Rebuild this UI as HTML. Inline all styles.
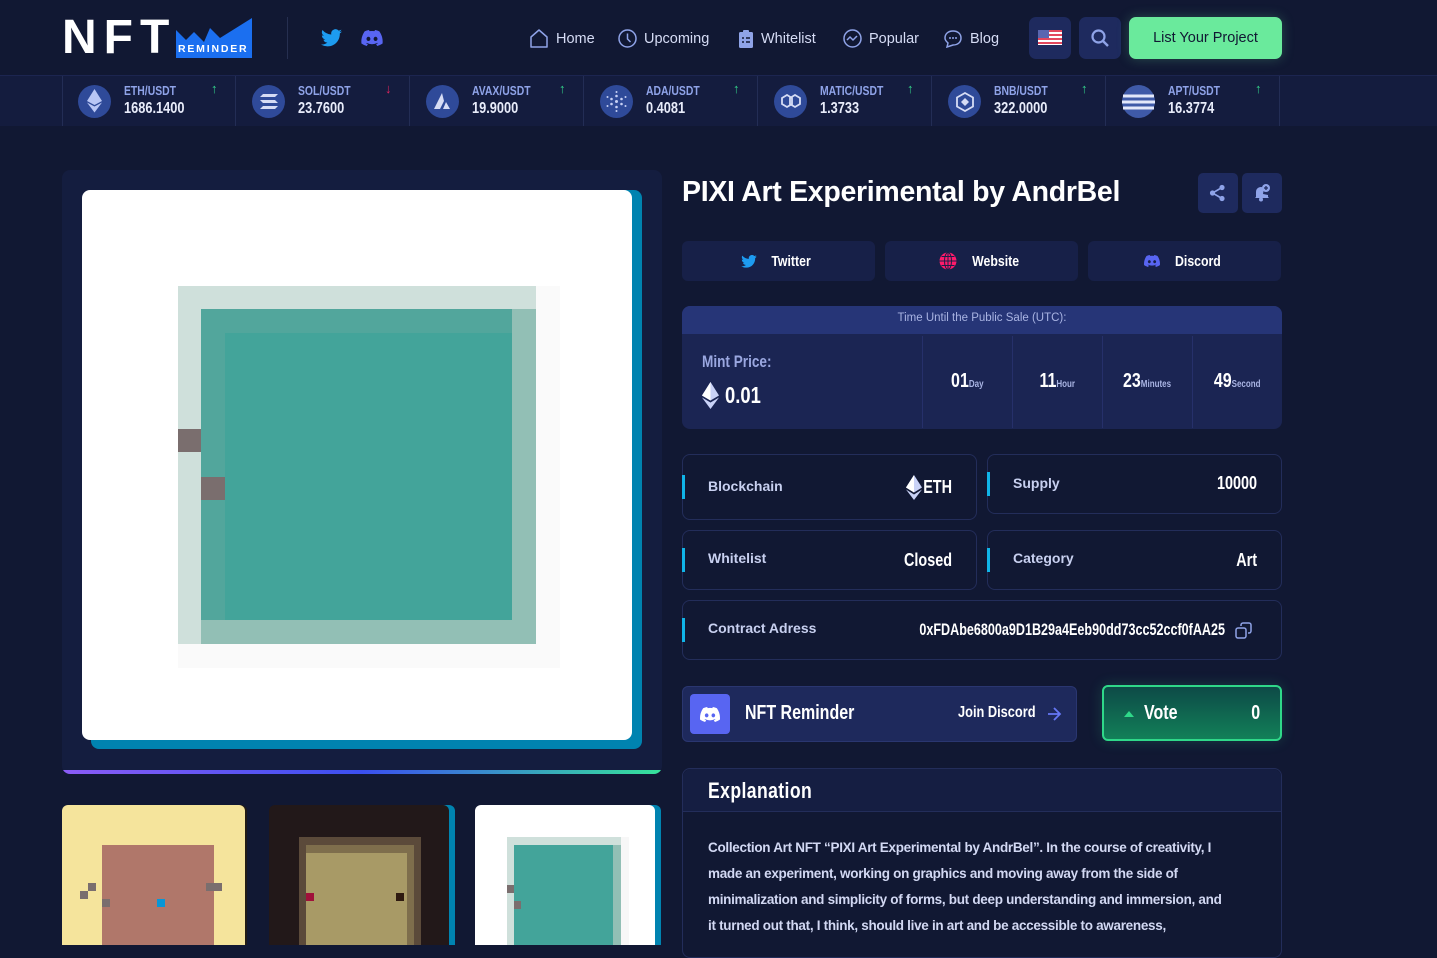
<!DOCTYPE html>
<html><head><meta charset="utf-8">
<style>
*{margin:0;padding:0;box-sizing:border-box}
body{width:1437px;height:940px;overflow:hidden;background:#111833;font-family:"Liberation Sans",sans-serif;color:#fff;position:relative}
.a{position:absolute}
.n{font-weight:bold;transform:scaleX(.8);transform-origin:left center;white-space:nowrap}
.r{transform-origin:right center}
.nav{font-size:14.5px;color:#d6dcf5;display:flex;align-items:center;gap:7px}
.tk{position:absolute;top:76px;height:50px;width:174px;border-right:1px solid #232d55}
.tk .ic{position:absolute;left:16px;top:9px;width:33px;height:33px;border-radius:50%;background:#2f4a99}
.tk .l{position:absolute;left:62px;top:7px;font-size:13px;color:#8fa3e8}
.tk .v{position:absolute;left:62px;top:24px;font-size:16px;color:#e8ecfa}
.tk .ar{position:absolute;left:149px;top:5px;font-size:13px;font-weight:bold}
.sb{position:absolute;top:241px;height:40px;width:193px;background:#172048;border-radius:6px;display:flex;align-items:center;justify-content:center;gap:10px;font-size:15px}
.sb span{font-weight:bold;display:inline-block;transform:scaleX(.82)}
.box{position:absolute;border:1px solid #232d5a;border-radius:8px;background:#111833}
.box .bar{position:absolute;left:-1px;width:3px;height:24px;background:#10b4e8}
.box .k{position:absolute;left:25px;font-size:14px;color:#c8d0f0;font-weight:bold}
.box .val{position:absolute;right:24px;font-size:18px}
.cd{position:absolute;top:336px;width:90px;height:92px;border-left:1px solid #26306a;text-align:center;line-height:90px;font-size:20px}
.cd span{display:inline-block;font-weight:bold;transform:scaleX(.8)}
.cd small{font-size:10px;color:#a9b4e3;font-weight:bold}
</style></head><body>

<div class="a" style="left:62px;top:14px;width:190px;height:46px">
  <div class="a" style="left:0;top:1px;font-size:48px;font-weight:900;letter-spacing:7px;line-height:46px;color:#fff">NFT</div>
  <svg class="a" style="left:114px;top:2px" width="76" height="42"><path d="M0 14 L10 24 L18 16 L28 26 L34 12 L44 22 L76 2 L76 42 L0 42Z" fill="#1b6ff0"/></svg>
  <div class="a" style="left:116px;top:29px;font-size:10.5px;font-weight:bold;letter-spacing:1.8px;color:#fff">REMINDER</div>
</div>
<div class="a" style="left:287px;top:17px;width:1px;height:42px;background:#262f50"></div>
<svg class="a" style="left:321px;top:29px" width="21" height="18" viewBox="0 0 24 20"><path d="M24 2.4a10 10 0 0 1-2.8.8A5 5 0 0 0 23.3.4a10 10 0 0 1-3.1 1.2A4.9 4.9 0 0 0 11.8 6 14 14 0 0 1 1.7.9a4.9 4.9 0 0 0 1.5 6.6 4.9 4.9 0 0 1-2.2-.6 4.9 4.9 0 0 0 3.9 4.9 4.9 4.9 0 0 1-2.2.1 4.9 4.9 0 0 0 4.6 3.4A9.9 9.9 0 0 1 0 17.3 14 14 0 0 0 7.5 19.5c9.1 0 14-7.5 14-14v-.6A10 10 0 0 0 24 2.4z" fill="#1d9bf0"/></svg>
<svg class="a" style="left:361px;top:30px" width="22" height="16" viewBox="0 0 24 18"><path d="M20.3 1.5A19.8 19.8 0 0 0 15.4 0l-.6 1.3a18 18 0 0 0-5.6 0L8.6 0a19.7 19.7 0 0 0-4.9 1.5C.6 6.2-.3 10.7.1 15.2A20 20 0 0 0 6.1 18l1.3-2.1a13 13 0 0 1-2-1l.5-.4a14 14 0 0 0 12.2 0l.5.4a13 13 0 0 1-2 1L17.9 18a20 20 0 0 0 6-2.8c.5-5.2-.9-9.7-3.6-13.7zM8 12.4c-1.2 0-2.2-1.1-2.2-2.4S6.8 7.6 8 7.6s2.2 1.1 2.2 2.4-1 2.4-2.2 2.4zm8 0c-1.2 0-2.2-1.1-2.2-2.4s1-2.4 2.2-2.4 2.2 1.1 2.2 2.4-1 2.4-2.2 2.4z" fill="#5865f2"/></svg>

<div class="a nav" style="left:529px;top:29px"><svg width="20" height="19" viewBox="0 0 20 19"><path d="M2 8 L10 1 L18 8 V18 H2Z" fill="none" stroke="#8fa3e8" stroke-width="1.5" stroke-linejoin="round"/></svg>Home</div>
<div class="a nav" style="left:618px;top:29px"><svg width="19" height="19"><circle cx="9.5" cy="9.5" r="8.5" fill="none" stroke="#8fa3e8" stroke-width="1.5"/><path d="M9.5 4.5V10l3 3" fill="none" stroke="#8fa3e8" stroke-width="1.5"/></svg>Upcoming</div>
<div class="a nav" style="left:738px;top:29px"><svg width="16" height="19"><rect x="1" y="3" width="14" height="16" rx="1.5" fill="#8fa3e8"/><rect x="5" y="1" width="6" height="4" rx="1" fill="#8fa3e8"/><path d="M4 9h2M8 9h4M4 13h2M8 13h4" stroke="#111833" stroke-width="1.4"/></svg>Whitelist</div>
<div class="a nav" style="left:843px;top:29px"><svg width="19" height="19"><circle cx="9.5" cy="9.5" r="8.5" fill="none" stroke="#8fa3e8" stroke-width="1.5"/><path d="M4 11l3-3 3 3 4-4" fill="none" stroke="#8fa3e8" stroke-width="1.5"/></svg>Popular</div>
<div class="a nav" style="left:943px;top:29px"><svg width="20" height="19"><path d="M10 2c5 0 8 3 8 7s-3 7-8 7l-6 2 1-4C3 12 2 11 2 9c0-4 3-7 8-7z" fill="none" stroke="#8fa3e8" stroke-width="1.5"/><circle cx="7" cy="9" r="1" fill="#8fa3e8"/><circle cx="10" cy="9" r="1" fill="#8fa3e8"/><circle cx="13" cy="9" r="1" fill="#8fa3e8"/></svg>Blog</div>

<div class="a" style="left:1029px;top:17px;width:42px;height:42px;border-radius:7px;background:#1e2a5e">
<svg class="a" style="left:9px;top:13px" width="24" height="15"><rect width="24" height="15" fill="#fff"/><path d="M0 1h24M0 5h24M0 9h24M0 13h24" stroke="#e3475d" stroke-width="2"/><rect width="11" height="8" fill="#5a66b0"/></svg></div>
<div class="a" style="left:1079px;top:17px;width:42px;height:42px;border-radius:7px;background:#1e2a5e">
<svg class="a" style="left:12px;top:12px" width="18" height="18"><circle cx="7.5" cy="7.5" r="6" fill="none" stroke="#8fa3e8" stroke-width="2.2"/><path d="M12 12l5 5" stroke="#8fa3e8" stroke-width="2.4"/></svg></div>
<div class="a" style="left:1129px;top:17px;width:153px;height:42px;border-radius:7px;background:#6aea9c;color:#111833;font-size:14.5px;text-align:center;line-height:42px;box-shadow:0 0 12px rgba(106,234,156,.25)">List Your Project</div>

<div class="a" style="left:0;top:75px;width:1437px;height:51px;background:#141c3e;border-top:1px solid #1c2550"></div>
<div class="a" style="left:62px;top:76px;width:1px;height:50px;background:#232d55"></div>
<div class="tk" style="left:62px"><div class="ic"></div><svg class="a" style="left:25px;top:13px" width="15" height="24"><path d="M7.5 0L0 12l7.5 4 7.5-4z" fill="#b9c6f5"/><path d="M0 13.5l7.5 10 7.5-10-7.5 4z" fill="#b9c6f5"/></svg><div class="l n">ETH/USDT</div><div class="v n">1686.1400</div><div class="ar" style="color:#33d28a">↑</div></div>
<div class="tk" style="left:236px"><div class="ic"></div><svg class="a" style="left:24px;top:18px" width="18" height="15"><path d="M3 0h15l-3 3H0zM0 6h15l3 3H3zM3 12h15l-3 3H0z" fill="#d6dcf5"/></svg><div class="l n">SOL/USDT</div><div class="v n">23.7600</div><div class="ar" style="color:#e0245e">↓</div></div>
<div class="tk" style="left:410px"><div class="ic"></div><svg class="a" style="left:24px;top:17px" width="18" height="16"><path d="M8 0L0 16h6l4-8zM12 9l-3 7h7z" fill="#d6dcf5"/></svg><div class="l n">AVAX/USDT</div><div class="v n">19.9000</div><div class="ar" style="color:#33d28a">↑</div></div>
<div class="tk" style="left:584px"><div class="ic"></div><svg class="a" style="left:22px;top:15px" width="21" height="21"><g fill="#c7d0f5"><circle cx="10.5" cy="10.5" r="1.5"/><circle cx="10.5" cy="5" r="1.3"/><circle cx="10.5" cy="16" r="1.3"/><circle cx="5.5" cy="8" r="1.3"/><circle cx="15.5" cy="8" r="1.3"/><circle cx="5.5" cy="13" r="1.3"/><circle cx="15.5" cy="13" r="1.3"/><circle cx="10.5" cy="1" r="1"/><circle cx="10.5" cy="20" r="1"/><circle cx="1.5" cy="6" r="1"/><circle cx="19.5" cy="6" r="1"/><circle cx="1.5" cy="15" r="1"/><circle cx="19.5" cy="15" r="1"/></g></svg><div class="l n">ADA/USDT</div><div class="v n">0.4081</div><div class="ar" style="color:#33d28a">↑</div></div>
<div class="tk" style="left:758px"><div class="ic"></div><svg class="a" style="left:22px;top:18px" width="22" height="15"><path d="M2 4l5-3 5 3v6l-5 3-5-3zM10 4l5-3 5 3v6l-5 3-5-3z" fill="none" stroke="#d6dcf5" stroke-width="1.8"/></svg><div class="l n">MATIC/USDT</div><div class="v n">1.3733</div><div class="ar" style="color:#33d28a">↑</div></div>
<div class="tk" style="left:932px"><div class="ic"></div><svg class="a" style="left:23px;top:16px" width="20" height="20"><path d="M10 1l8 4.5v9L10 19l-8-4.5v-9z" fill="none" stroke="#d6dcf5" stroke-width="1.8"/><path d="M10 6l4 4-4 4-4-4z" fill="#d6dcf5"/></svg><div class="l n">BNB/USDT</div><div class="v n">322.0000</div><div class="ar" style="color:#33d28a">↑</div></div>
<div class="tk" style="left:1106px"><div class="ic" style="background:#3f5aa8"></div><svg class="a" style="left:16px;top:16px" width="33" height="20"><path d="M1 4h31M0 10h33M1 16h31" stroke="#e3e8fa" stroke-width="3"/></svg><div class="l n">APT/USDT</div><div class="v n">16.3774</div><div class="ar" style="color:#33d28a">↑</div></div>

<div class="a" style="left:62px;top:170px;width:600px;height:604px;background:#141d3f;border-radius:8px;overflow:hidden">
  <div class="a" style="left:0;bottom:0;width:600px;height:4px;background:linear-gradient(90deg,#8b5cf6,#3b4ff0 50%,#36e39a)"></div>
</div>
<div class="a" style="left:91px;top:190px;width:551px;height:559px;background:#0083b0;border-radius:8px"></div>
<div class="a" style="left:82px;top:190px;width:550px;height:550px;background:#fff;border-radius:8px;overflow:hidden">
  <div class="a" style="left:96px;top:96px;width:382px;height:382px;background:#fafafa"></div>
  <div class="a" style="left:96px;top:96px;width:358px;height:358px;background:#cfe0db"></div>
  <div class="a" style="left:119px;top:119px;width:335px;height:335px;background:#92bfb5"></div>
  <div class="a" style="left:119px;top:119px;width:311px;height:311px;background:#43a49a"></div>
  <div class="a" style="left:119px;top:119px;width:311px;height:24px;background:#52a69c"></div>
  <div class="a" style="left:119px;top:119px;width:24px;height:311px;background:#52a69c"></div>
  <div class="a" style="left:96px;top:239px;width:23px;height:23px;background:#7a6e6e"></div>
  <div class="a" style="left:119px;top:287px;width:24px;height:23px;background:#7a6e6e"></div>
</div>

<div class="a" style="left:62px;top:805px;width:183px;height:140px;background:#f5e49c;border-radius:6px 6px 0 0;overflow:hidden;box-shadow:2px 0 0 #221b15">
  <div class="a" style="left:40px;top:40px;width:112px;height:100px;background:#b0776a"></div>
  <div class="a" style="left:26px;top:78px;width:8px;height:8px;background:#7a6e6e"></div>
  <div class="a" style="left:18px;top:86px;width:8px;height:8px;background:#7a6e6e"></div>
  <div class="a" style="left:40px;top:94px;width:8px;height:8px;background:#7a6e6e"></div>
  <div class="a" style="left:144px;top:78px;width:16px;height:8px;background:#7a6e6e"></div>
  <div class="a" style="left:95px;top:94px;width:8px;height:8px;background:#0896d6"></div>
</div>
<div class="a" style="left:272px;top:805px;width:183px;height:140px;background:#0083b0;border-radius:6px 6px 0 0"></div>
<div class="a" style="left:269px;top:805px;width:180px;height:140px;background:#221819;border-radius:6px 6px 0 0;overflow:hidden">
  <div class="a" style="left:30px;top:32px;width:122px;height:110px;background:#5b4a3a"></div>
  <div class="a" style="left:37px;top:40px;width:108px;height:100px;background:#7e6e4c"></div>
  <div class="a" style="left:37px;top:48px;width:101px;height:92px;background:#a89a66"></div>
  <div class="a" style="left:37px;top:88px;width:8px;height:8px;background:#a0103a"></div>
  <div class="a" style="left:127px;top:88px;width:8px;height:8px;background:#2e1a10"></div>
</div>
<div class="a" style="left:478px;top:805px;width:183px;height:140px;background:#0083b0;border-radius:6px 6px 0 0"></div>
<div class="a" style="left:475px;top:805px;width:180px;height:140px;background:#fff;border-radius:6px 6px 0 0;overflow:hidden">
  <div class="a" style="left:32px;top:32px;width:122px;height:110px;background:#f7f7f7"></div>
  <div class="a" style="left:32px;top:32px;width:114px;height:110px;background:#cfe0db"></div>
  <div class="a" style="left:39px;top:40px;width:107px;height:100px;background:#92bfb5"></div>
  <div class="a" style="left:39px;top:40px;width:99px;height:100px;background:#43a49a"></div>
  <div class="a" style="left:32px;top:80px;width:7px;height:8px;background:#7a6e6e"></div>
  <div class="a" style="left:39px;top:96px;width:7px;height:8px;background:#7a6e6e"></div>
</div>

<div class="a" style="left:682px;top:176px;font-size:28.5px;font-weight:bold;letter-spacing:-0.3px">PIXI Art Experimental by AndrBel</div>
<div class="a" style="left:1198px;top:173px;width:40px;height:40px;border-radius:5px;background:#1e2a5e"><svg class="a" style="left:11px;top:11px" width="17" height="18"><circle cx="13" cy="3.5" r="2.6" fill="#8fa3e8"/><circle cx="3.5" cy="9" r="2.6" fill="#8fa3e8"/><circle cx="13" cy="14.5" r="2.6" fill="#8fa3e8"/><path d="M13 3.5L3.5 9l9.5 5.5" stroke="#8fa3e8" stroke-width="1.6" fill="none"/></svg></div>
<div class="a" style="left:1242px;top:173px;width:40px;height:40px;border-radius:5px;background:#1e2a5e"><svg class="a" style="left:11px;top:10px" width="18" height="19"><path d="M3 14V9a5 5 0 0 1 8-4l-1 6 5 1v2l1 1H2z" fill="#8fa3e8"/><circle cx="8" cy="16.5" r="2" fill="#8fa3e8"/><circle cx="13" cy="5" r="4" fill="#8fa3e8"/><path d="M13 3v4M11 5h4" stroke="#1e2a5e" stroke-width="1.3"/></svg></div>

<div class="sb" style="left:682px"><svg width="16" height="13" viewBox="0 0 24 20"><path d="M24 2.4a10 10 0 0 1-2.8.8A5 5 0 0 0 23.3.4a10 10 0 0 1-3.1 1.2A4.9 4.9 0 0 0 11.8 6 14 14 0 0 1 1.7.9a4.9 4.9 0 0 0 1.5 6.6 4.9 4.9 0 0 1-2.2-.6 4.9 4.9 0 0 0 3.9 4.9 4.9 4.9 0 0 1-2.2.1 4.9 4.9 0 0 0 4.6 3.4A9.9 9.9 0 0 1 0 17.3 14 14 0 0 0 7.5 19.5c9.1 0 14-7.5 14-14v-.6A10 10 0 0 0 24 2.4z" fill="#1d9bf0"/></svg><span>Twitter</span></div>
<div class="sb" style="left:885px"><svg width="18" height="18"><circle cx="9" cy="9" r="8.5" fill="#ff1a6b"/><path d="M0.5 9h17M9 .5v17M2.5 4.5h13M2.5 13.5h13" stroke="#172048" stroke-width="1"/><ellipse cx="9" cy="9" rx="3.5" ry="8.5" fill="none" stroke="#172048" stroke-width="1"/></svg><span>Website</span></div>
<div class="sb" style="left:1088px"><svg width="16" height="12" viewBox="0 0 24 18"><path d="M20.3 1.5A19.8 19.8 0 0 0 15.4 0l-.6 1.3a18 18 0 0 0-5.6 0L8.6 0a19.7 19.7 0 0 0-4.9 1.5C.6 6.2-.3 10.7.1 15.2A20 20 0 0 0 6.1 18l1.3-2.1a13 13 0 0 1-2-1l.5-.4a14 14 0 0 0 12.2 0l.5.4a13 13 0 0 1-2 1L17.9 18a20 20 0 0 0 6-2.8c.5-5.2-.9-9.7-3.6-13.7zM8 12.4c-1.2 0-2.2-1.1-2.2-2.4S6.8 7.6 8 7.6s2.2 1.1 2.2 2.4-1 2.4-2.2 2.4zm8 0c-1.2 0-2.2-1.1-2.2-2.4s1-2.4 2.2-2.4 2.2 1.1 2.2 2.4-1 2.4-2.2 2.4z" fill="#5865f2"/></svg><span>Discord</span></div>

<div class="a" style="left:682px;top:306px;width:600px;height:123px;background:#1b2553;border-radius:8px;overflow:hidden">
  <div class="a" style="left:0;top:0;width:600px;height:28px;background:#263577;text-align:center;font-size:11.5px;line-height:25px;color:#a9b4e3">Time Until the Public Sale (UTC):</div>
</div>
<div class="a n" style="left:702px;top:352px;font-size:17px;color:#9aa7e0">Mint Price:</div>
<svg class="a" style="left:702px;top:382px" width="17" height="27"><path d="M8.5 0L0 13.5l8.5 5 8.5-5z" fill="#c9d2f7"/><path d="M8.5 0v18.5L0 13.5z" fill="#fff"/><path d="M0 15.5l8.5 11.5 8.5-11.5-8.5 5z" fill="#c9d2f7"/></svg>
<div class="a n" style="left:725px;top:382px;font-size:23px">0.01</div>
<div class="cd" style="left:922px"><span>01<small>Day</small></span></div>
<div class="cd" style="left:1012px"><span>11<small>Hour</small></span></div>
<div class="cd" style="left:1102px"><span>23<small>Minutes</small></span></div>
<div class="cd" style="left:1192px"><span>49<small>Second</small></span></div>

<div class="box" style="left:682px;top:454px;width:295px;height:66px"><div class="bar" style="top:20px"></div><div class="k" style="top:23px">Blockchain</div>
<svg class="a" style="left:223px;top:20px" width="16" height="25"><path d="M8 0L0 12.5l8 5 8-5z" fill="#c9d2f7"/><path d="M8 0v17.5L0 12.5z" fill="#fff"/><path d="M0 14.5l8 10.5 8-10.5-8 5z" fill="#c9d2f7"/></svg><div class="val n r" style="top:22px">ETH</div></div>
<div class="box" style="left:987px;top:454px;width:295px;height:60px"><div class="bar" style="top:17px"></div><div class="k" style="top:20px">Supply</div><div class="val n r" style="top:18px">10000</div></div>
<div class="box" style="left:682px;top:530px;width:295px;height:60px"><div class="bar" style="top:17px"></div><div class="k" style="top:19px">Whitelist</div><div class="val n r" style="top:19px">Closed</div></div>
<div class="box" style="left:987px;top:530px;width:295px;height:60px"><div class="bar" style="top:17px"></div><div class="k" style="top:19px">Category</div><div class="val n r" style="top:19px">Art</div></div>
<div class="box" style="left:682px;top:600px;width:600px;height:60px"><div class="bar" style="top:17px"></div><div class="k" style="top:19px">Contract Adress</div><div class="val n r" style="top:19px;right:56px;font-size:17px;transform:scaleX(.74)">0xFDAbe6800a9D1B29a4Eeb90dd73cc52ccf0fAA25</div>
<svg class="a" style="left:552px;top:21px" width="17" height="17"><rect x="1" y="6" width="10" height="10" rx="2" fill="none" stroke="#8fa3e8" stroke-width="1.5"/><path d="M6 4V3a2 2 0 0 1 2-2h6a2 2 0 0 1 2 2v6a2 2 0 0 1-2 2h-1" fill="none" stroke="#8fa3e8" stroke-width="1.5"/></svg></div>

<div class="a" style="left:682px;top:686px;width:395px;height:56px;background:#1e295c;border:1px solid #2a3670;border-radius:6px;overflow:hidden">
  <div class="a" style="left:7px;top:7px;width:40px;height:40px;border-radius:4px;background:#5865f2"><svg class="a" style="left:10px;top:13px" width="20" height="15" viewBox="0 0 24 18"><path d="M20.3 1.5A19.8 19.8 0 0 0 15.4 0l-.6 1.3a18 18 0 0 0-5.6 0L8.6 0a19.7 19.7 0 0 0-4.9 1.5C.6 6.2-.3 10.7.1 15.2A20 20 0 0 0 6.1 18l1.3-2.1a13 13 0 0 1-2-1l.5-.4a14 14 0 0 0 12.2 0l.5.4a13 13 0 0 1-2 1L17.9 18a20 20 0 0 0 6-2.8c.5-5.2-.9-9.7-3.6-13.7zM8 12.4c-1.2 0-2.2-1.1-2.2-2.4S6.8 7.6 8 7.6s2.2 1.1 2.2 2.4-1 2.4-2.2 2.4zm8 0c-1.2 0-2.2-1.1-2.2-2.4s1-2.4 2.2-2.4 2.2 1.1 2.2 2.4-1 2.4-2.2 2.4z" fill="#fff"/></svg></div>
  <div class="a n" style="left:62px;top:15px;font-size:20px">NFT Reminder</div>
  <div class="a n" style="left:275px;top:17px;font-size:16px">Join Discord</div>
  <svg class="a" style="left:364px;top:20px" width="15" height="14"><path d="M1 7h12M7 1l6 6-6 6" fill="none" stroke="#6677f5" stroke-width="1.8"/></svg>
</div>
<div class="a" style="left:1102px;top:685px;width:180px;height:56px;border:2px solid #2fd889;border-radius:6px;background:linear-gradient(180deg,#0d4a47,#128058);box-shadow:0 0 14px rgba(47,216,137,.2)">
  <div class="a" style="left:20px;top:24px;width:0;height:0;border-left:5px solid transparent;border-right:5px solid transparent;border-bottom:6px solid #2fd889"></div>
  <div class="a n" style="left:40px;top:15px;font-size:20px">Vote</div>
  <div class="a n r" style="right:20px;top:15px;font-size:20px">0</div>
</div>

<div class="a" style="left:682px;top:768px;width:600px;height:190px;border:1px solid #232d5a;border-radius:8px;background:#111833">
  <div class="a" style="left:0;top:0;width:598px;height:43px;background:#151e42;border-bottom:1px solid #232d5a;border-radius:8px 8px 0 0"></div>
  <div class="a n" style="left:25px;top:9px;font-size:22px;letter-spacing:0.5px">Explanation</div>
  <div class="a" style="left:25px;top:66px;width:518px;font-size:13.5px;line-height:26px;color:#d2d8f3;font-weight:bold;letter-spacing:-0.3px">Collection Art NFT “PIXI Art Experimental by AndrBel”. In the course of creativity, I made an experiment, working on graphics and moving away from the side of minimalization and simplicity of forms, but deep understanding and immersion, and it turned out that, I think, should live in art and be accessible to awareness,</div>
</div>
</body></html>
